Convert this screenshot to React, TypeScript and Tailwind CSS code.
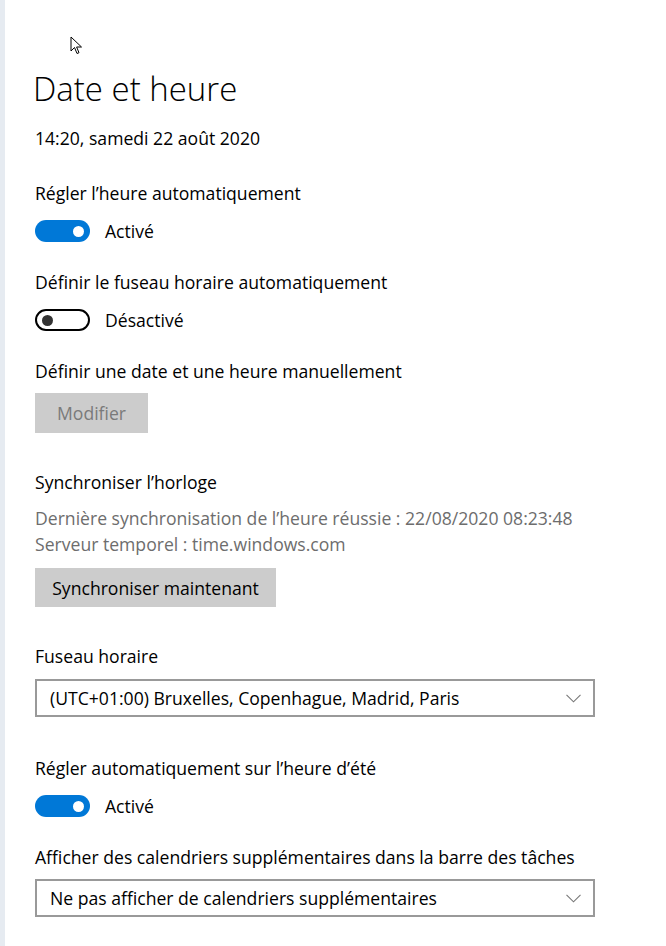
function Toggle({ on, label }: { on: boolean; label: string }) {
  return (
    <div className="mt-[14px] flex h-6 items-center">
      {on ? (
        <div className="flex h-[22px] w-[55px] items-center justify-end rounded-full bg-[#0078d7] pr-[6px]">
          <div className="h-[11px] w-[11px] rounded-full bg-white" />
        </div>
      ) : (
        <div className="flex h-[22px] w-[55px] items-center rounded-full border-2 border-black pl-[5px]">
          <div className="h-[11px] w-[11px] rounded-full bg-[#333]" />
        </div>
      )}
      <span className="ml-[15px]">{label}</span>
    </div>
  );
}

function Select({ value }: { value: string }) {
  return (
    <div className="flex h-[38px] w-[560px] items-center justify-between border-2 border-[#999] pl-[13px] pr-[12px]">
      <span>{value}</span>
      <svg width="15" height="9" viewBox="0 0 15 9" fill="none" stroke="#777" strokeWidth="1.1">
        <path d="M0.5 0.8 L7.5 7.8 L14.5 0.8" />
      </svg>
    </div>
  );
}

export default function App() {
  return (
    <div className="relative flex h-[946px] w-[666px] bg-white font-['Open_Sans',sans-serif] text-[17.6px] leading-6 text-black">
      <div className="w-[5px] shrink-0 bg-[#e6ebf1]" />

      <svg className="absolute left-[70px] top-[36px]" width="14" height="19" viewBox="0 0 14 19">
        <path d="M1 1 L1 15 L4.5 11.5 L7 17.5 L9 16.7 L6.6 11 L11.5 11 Z" fill="white" stroke="black" strokeWidth="1" strokeLinejoin="round" />
      </svg>

      <div className="flex flex-col pl-[30px]">
        <h1 className="-ml-[2px] mt-[69px] h-10 text-[33px] font-light leading-10">Date et heure</h1>
        <div className="mt-[17px]">14:20, samedi 22 août 2020</div>

        <div className="mt-[31px]">Régler l’heure automatiquement</div>
        <Toggle on label="Activé" />

        <div className="mt-[27px]">Définir le fuseau horaire automatiquement</div>
        <Toggle on={false} label="Désactivé" />

        <div className="mt-[27px]">Définir une date et une heure manuellement</div>
        <div className="mt-[10px] flex h-10 w-[113px] items-center justify-center bg-[#cccccc] text-[#7a7a7a]">
          Modifier
        </div>

        <div className="mt-[37px]">Synchroniser l’horloge</div>
        <div className="mt-[11px] leading-[26px] text-[#6d6d6d]">
          <div>Dernière synchronisation de l’heure réussie : 22/08/2020 08:23:48</div>
          <div>Serveur temporel : time.windows.com</div>
        </div>
        <div className="mt-[11px] flex h-[39px] w-[241px] items-center justify-center bg-[#cccccc]">
          Synchroniser maintenant
        </div>

        <div className="mt-[37px]">Fuseau horaire</div>
        <div className="mt-[11px]">
          <Select value="(UTC+01:00) Bruxelles, Copenhague, Madrid, Paris" />
        </div>

        <div className="mt-[39px]">Régler automatiquement sur l’heure d’été</div>
        <Toggle on label="Activé" />

        <div className="mt-[27px]">Afficher des calendriers supplémentaires dans la barre des tâches</div>
        <div className="mt-[10px]">
          <Select value="Ne pas afficher de calendriers supplémentaires" />
        </div>
      </div>
    </div>
  );
}
